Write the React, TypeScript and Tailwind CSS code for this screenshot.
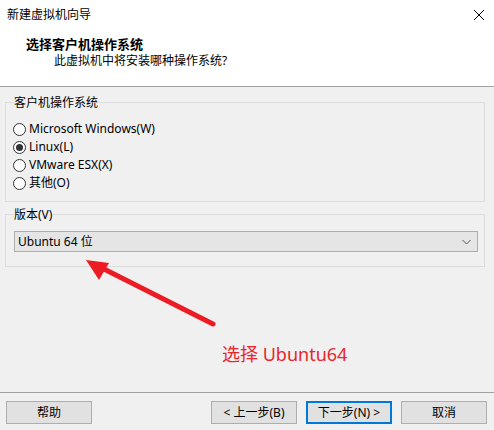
import React from 'react';

const font = { fontFamily: '"Noto Sans", "Noto Sans CJK SC", sans-serif' };

function Radio({ label, checked = false }: { label: string; checked?: boolean }) {
  return (
    <div className="flex items-center h-[18px]">
      <span className="w-[13px] h-[13px] rounded-full border border-[#333] bg-white flex items-center justify-center">
        {checked && <span className="w-[7px] h-[7px] rounded-full bg-[#333]" />}
      </span>
      <span className="ml-[3px] text-[12px] text-black leading-none">{label}</span>
    </div>
  );
}

function Btn({ label, primary = false }: { label: string; primary?: boolean }) {
  return (
    <button
      className={
        primary
          ? 'w-[86px] h-[23px] bg-[#e1e1e1] border-2 border-[#0078d7] text-[12px] text-black flex items-center justify-center'
          : 'w-[86px] h-[23px] bg-[#e1e1e1] border border-[#adadad] text-[12px] text-black flex items-center justify-center'
      }
    >
      {label}
    </button>
  );
}

export default function App() {
  return (
    <div
      className="w-[494px] h-[430px] bg-[#f0f0f0] flex flex-col relative overflow-hidden"
      style={font}
    >
      {/* header */}
      <div className="bg-white h-[87px] border-b border-[#a0a0a0] flex flex-col">
        <div className="h-[30px] flex items-center justify-between pl-[7px] pr-[8px]">
          <span className="text-[12px] text-black">新建虚拟机向导</span>
          <svg width="12" height="12" viewBox="0 0 12 12" className="mr-[1px]">
            <path d="M1 1 L11 11 M11 1 L1 11" stroke="#000" strokeWidth="1" />
          </svg>
        </div>
        <div className="pl-[26px] pt-[6px] text-[13px] font-bold text-black leading-[16px]">
          选择客户机操作系统
        </div>
        <div className="pl-[54px] pt-[1px] text-[12px] text-black leading-[16px]">
          此虚拟机中将安装哪种操作系统?
        </div>
      </div>

      {/* body */}
      <div className="flex flex-col pl-[5px] pr-[9px] pt-[7px] gap-[4px]">
        <fieldset className="border border-[#dcdcdc] pl-[7px] pr-[8px] pt-[9px] pb-[9px]">
          <legend className="px-[1px] text-[12px] text-black leading-[17px]">客户机操作系统</legend>
          <Radio label="Microsoft Windows(W)" />
          <Radio label="Linux(L)" checked />
          <Radio label="VMware ESX(X)" />
          <Radio label="其他(O)" />
        </fieldset>

        <fieldset className="border border-[#dcdcdc] pl-[8px] pr-[6px] pt-[8px] pb-[14px]">
          <legend className="ml-[-1px] px-[1px] text-[12px] text-black leading-[17px]">版本(V)</legend>
          <div className="h-[21px] bg-[#e5e5e5] border border-[#adadad] flex items-center justify-between pl-[3px] pr-[6px]">
            <span className="text-[12px] text-black">Ubuntu 64 位</span>
            <svg width="9" height="6" viewBox="0 0 9 6">
              <path d="M0.5 1 L4.5 5 L8.5 1" stroke="#555" fill="none" strokeWidth="1" />
            </svg>
          </div>
        </fieldset>
      </div>

      <div className="flex-1" />

      {/* footer */}
      <div className="border-t border-[#a0a0a0] h-[38px] flex items-start pt-[8px] px-[6px]">
        <Btn label="帮助" />
        <div className="flex-1" />
        <div className="flex gap-[9px]">
          <Btn label="< 上一步(B)" />
          <Btn label="下一步(N) >" primary />
          <Btn label="取消" />
        </div>
        <div className="w-[1px]" />
      </div>

      {/* annotation overlay */}
      <svg className="absolute left-0 top-0 pointer-events-none" width="494" height="430">
        <line x1="98" y1="266" x2="213" y2="324" stroke="#ec1c24" strokeWidth="5" strokeLinecap="round" />
        <polygon points="86,260 109,263 99,280" fill="#ec1c24" />
      </svg>
      <span className="absolute left-[222px] top-[343px] text-[18px] text-[#e8262b] leading-[22px]">
        选择 Ubuntu64
      </span>
    </div>
  );
}
